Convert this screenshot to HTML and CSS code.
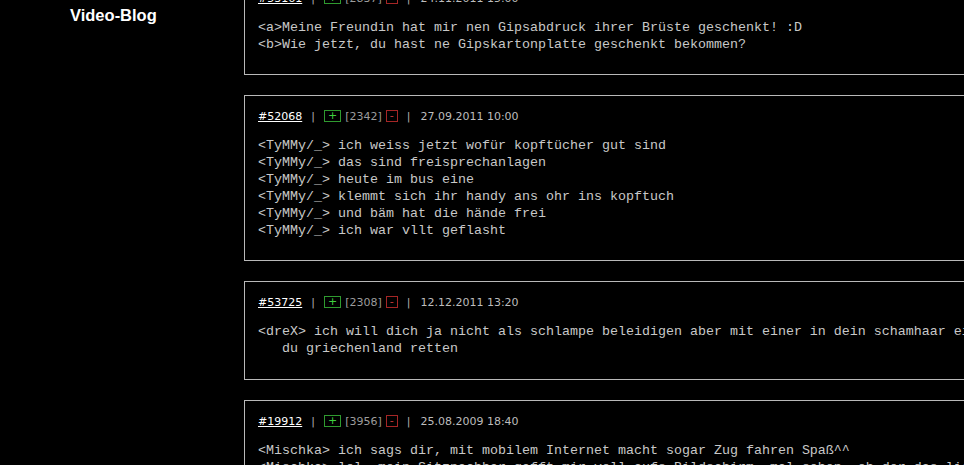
FILE: index.html
```html
<!DOCTYPE html>
<html lang="de">
<head>
<meta charset="utf-8">
<title>Video-Blog</title>
<link rel="stylesheet" href="styles.css">
</head>
<body>
<div class="page">
  <nav class="sidebar">
    <a class="nav-item" href="#">Video-Blog</a>
  </nav>
  <main class="quotes">
    <article class="quote">
      <div class="meta">
        <a class="qid" href="#">#53161</a>
        <span class="sep">|</span>
        <span class="vote plus">+</span>
        <span class="count">[2837]</span>
        <span class="vote minus">-</span>
        <span class="sep">|</span>
        <span class="date">24.11.2011 15:00</span>
      </div>
      <div class="text">
        <div class="line">&lt;a&gt;Meine Freundin hat mir nen Gipsabdruck ihrer Brüste geschenkt! :D</div>
        <div class="line">&lt;b&gt;Wie jetzt, du hast ne Gipskartonplatte geschenkt bekommen?</div>
      </div>
    </article>
    <article class="quote">
      <div class="meta">
        <a class="qid" href="#">#52068</a>
        <span class="sep">|</span>
        <span class="vote plus">+</span>
        <span class="count">[2342]</span>
        <span class="vote minus">-</span>
        <span class="sep">|</span>
        <span class="date">27.09.2011 10:00</span>
      </div>
      <div class="text">
        <div class="line">&lt;TyMMy/_&gt; ich weiss jetzt wofür kopftücher gut sind</div>
        <div class="line">&lt;TyMMy/_&gt; das sind freisprechanlagen</div>
        <div class="line">&lt;TyMMy/_&gt; heute im bus eine</div>
        <div class="line">&lt;TyMMy/_&gt; klemmt sich ihr handy ans ohr ins kopftuch</div>
        <div class="line">&lt;TyMMy/_&gt; und bäm hat die hände frei</div>
        <div class="line">&lt;TyMMy/_&gt; ich war vllt geflasht</div>
      </div>
    </article>
    <article class="quote">
      <div class="meta">
        <a class="qid" href="#">#53725</a>
        <span class="sep">|</span>
        <span class="vote plus">+</span>
        <span class="count">[2308]</span>
        <span class="vote minus">-</span>
        <span class="sep">|</span>
        <span class="date">12.12.2011 13:20</span>
      </div>
      <div class="text">
        <div class="line">&lt;dreX&gt; ich will dich ja nicht als schlampe beleidigen aber mit einer in dein schamhaar eingeflochtenen münze könntest</div>
        <div class="line cont">du griechenland retten</div>
      </div>
    </article>
    <article class="quote">
      <div class="meta">
        <a class="qid" href="#">#19912</a>
        <span class="sep">|</span>
        <span class="vote plus">+</span>
        <span class="count">[3956]</span>
        <span class="vote minus">-</span>
        <span class="sep">|</span>
        <span class="date">25.08.2009 18:40</span>
      </div>
      <div class="text">
        <div class="line">&lt;Mischka&gt; ich sags dir, mit mobilem Internet macht sogar Zug fahren Spaß^^</div>
        <div class="line">&lt;Mischka&gt; lol, mein Sitznachbar gafft mir voll aufs Bildschirm, mal sehen, ob der das liest</div>
      </div>
    </article>
  </main>
</div>
</body>
</html>
```

FILE: styles.css
```css
html, body {
  margin: 0;
  padding: 0;
  background: #000;
  overflow: hidden;
}

.page {
  display: flex;
  align-items: flex-start;
  width: 1300px;
}

.sidebar {
  flex: none;
  width: 244px;
  padding-top: 5px;
}

.nav-item {
  display: block;
  padding-left: 70px;
  font-family: "Liberation Sans", Arial, sans-serif;
  font-weight: bold;
  font-size: 16.5px;
  line-height: 20px;
  color: #fff;
  text-decoration: none;
}

.quotes {
  flex: none;
  width: 1000px;
  margin-top: -23px;
  display: flex;
  flex-direction: column;
  gap: 20px;
}

.quote {
  border: 1px solid #b9b9b9;
  padding: 11px 13px 12px 13px;
}

.quote:nth-child(3) {
  padding-bottom: 13px;
}

.meta {
  display: flex;
  align-items: center;
  height: 18px;
  font-family: "DejaVu Sans", Verdana, sans-serif;
  font-size: 11px;
  color: #a8a8a8;
}

.qid {
  color: #fff;
  text-decoration: underline;
}

.sep {
  margin: 0 9px 0 9px;
  color: #b0b0b0;
}

.vote {
  display: inline-block;
  line-height: 10px;
  padding: 0 3px;
  border: 1px solid;
}

.plus {
  color: #3fcf3f;
  border-color: #2f9a2f;
}

.minus {
  color: #c83a3a;
  border-color: #a52626;
}

.count {
  margin: 0 4px;
  color: #9c9c9c;
}

.date {
  margin-left: 1px;
  color: #bdbdbd;
}

.text {
  margin: 12px 0 9px 0;
  font-family: "Courier New", "Nimbus Mono PS", "FreeMono", "Liberation Mono", monospace;
  font-size: 13.33px;
  line-height: 17px;
  color: #c8c8c8;
}

.line {
  white-space: nowrap;
}

.line.cont {
  padding-left: 3ch;
}
```
